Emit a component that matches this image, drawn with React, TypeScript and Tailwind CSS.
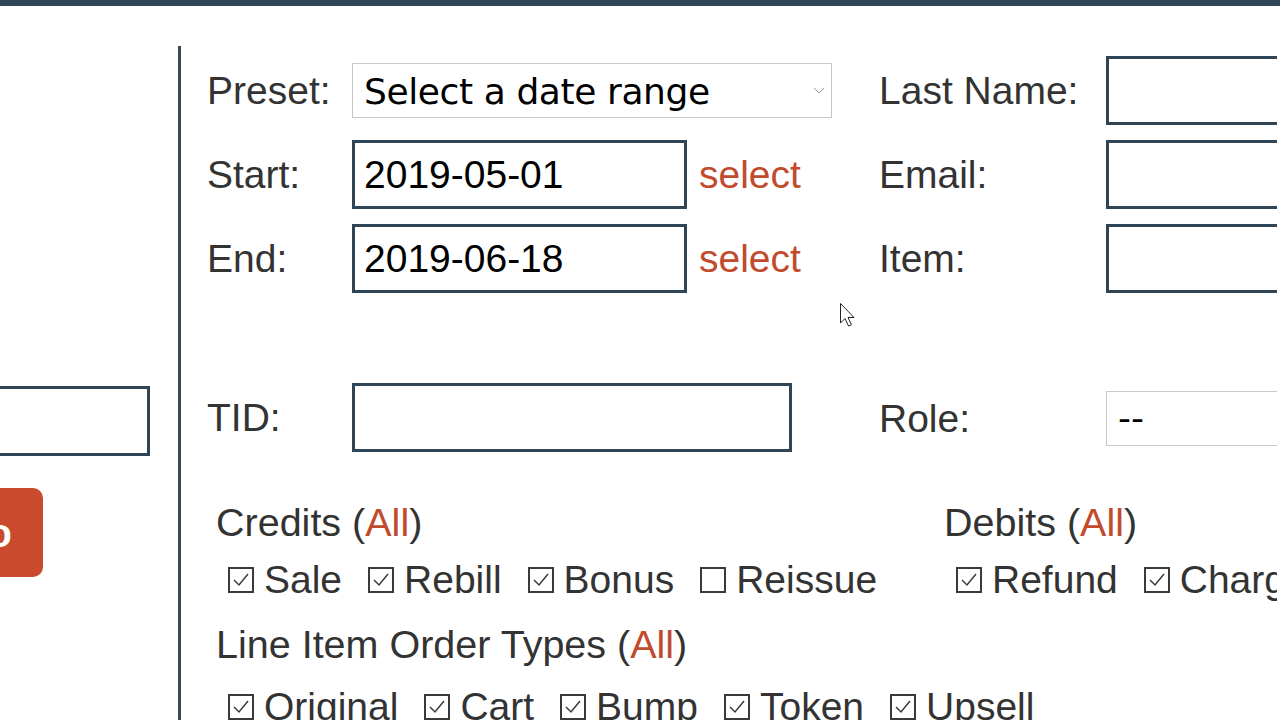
import React from "react";

function Box({ label, checked = true }: { label: string; checked?: boolean }) {
  return (
    <label className="flex items-center gap-[10px]">
      <svg width="26" height="26" viewBox="0 0 26 26" className="shrink-0">
        <rect x="1" y="1" width="24" height="24" fill="#fff" stroke="#3a3a3a" strokeWidth="2" />
        {checked && (
          <polyline points="6,13 11,18 20,7" fill="none" stroke="#3a3a3a" strokeWidth="1.5" />
        )}
      </svg>
      <span>{label}</span>
    </label>
  );
}

function Heading({ text }: { text: string }) {
  return (
    <div className="leading-[44px] whitespace-nowrap text-[39.5px]">
      {text} (<span className="text-[#c24a2d]">All</span>)
    </div>
  );
}

function Chevron() {
  return (
    <svg width="12" height="7" viewBox="0 0 12 7" className="shrink-0">
      <polyline points="1,1 6,6 11,1" fill="none" stroke="#9a9a9a" strokeWidth="1" />
    </svg>
  );
}

export default function App() {
  const textInput = "h-[69px] border-[3px] border-[#2f4454] bg-white pl-[9px] pt-[2px] flex items-center text-black";

  return (
    <div className="w-[1280px] h-[720px] overflow-hidden bg-white relative font-['Liberation_Sans',Arial,sans-serif] text-[39px] text-[#333]">
      <div className="h-[6px] bg-[#2e4558]" />

      <div className="flex mt-[40px]">
        {/* left column, mostly scrolled off */}
        <aside className="w-[178px] shrink-0 overflow-hidden pt-[340px]">
          <div className="-ml-[150px] w-[300px] h-[70px] border-[3px] border-[#2f4454]" />
          <button className="mt-[32px] -ml-[100px] w-[143px] h-[89px] rounded-[10px] bg-[#c94a2c] text-white font-bold text-[40px] flex items-center justify-end pr-[31px]">
            Go
          </button>
        </aside>

        <main className="w-[1099px] shrink-0 h-[674px] overflow-hidden border-l-[3px] border-[#34495e] pl-[26px]">
          <div className="flex">
            {/* date + tid column */}
            <div className="w-[625px] shrink-0 pt-[17px]">
              <div className="flex items-center h-[55px]">
                <span className="w-[145px] shrink-0 pt-[2px]">Preset:</span>
                <div className="w-[480px] h-[55px] border border-[#c8c8c8] flex items-center justify-between pl-[11px] pr-[6px] text-black font-['DejaVu_Sans',sans-serif] text-[36px] tracking-[-0.4px]">
                  <span className="pt-[3px]">Select a date range</span>
                  <Chevron />
                </div>
              </div>
              <div className="flex items-center mt-[22px]">
                <span className="w-[145px] shrink-0 pt-[2px]">Start:</span>
                <div className={`${textInput} w-[335px]`}>2019-05-01</div>
                <span className="ml-[12px] pt-[2px] text-[#c24a2d]">select</span>
              </div>
              <div className="flex items-center mt-[15px]">
                <span className="w-[145px] shrink-0 pt-[2px]">End:</span>
                <div className={`${textInput} w-[335px]`}>2019-06-18</div>
                <span className="ml-[12px] pt-[2px] text-[#c24a2d]">select</span>
              </div>
              <div className="flex items-center mt-[90px]">
                <span className="w-[145px] shrink-0 pt-[2px]">TID:</span>
                <div className={`${textInput} w-[440px]`} />
              </div>
            </div>

            {/* name / email column */}
            <div className="ml-[47px] shrink-0 pt-[10px]">
              <div className="flex items-center">
                <span className="w-[227px] shrink-0 pt-[2px]">Last Name:</span>
                <div className={`${textInput} w-[260px]`} />
              </div>
              <div className="flex items-center mt-[15px]">
                <span className="w-[227px] shrink-0 pt-[2px]">Email:</span>
                <div className={`${textInput} w-[260px]`} />
              </div>
              <div className="flex items-center mt-[15px]">
                <span className="w-[227px] shrink-0 pt-[2px]">Item:</span>
                <div className={`${textInput} w-[260px]`} />
              </div>
              <div className="flex items-center mt-[95px]">
                <span className="w-[227px] shrink-0 pt-[2px]">Role:</span>
                <div className="w-[260px] h-[55px] border border-[#c8c8c8] pl-[11px] flex items-center text-black font-['DejaVu_Sans',sans-serif] text-[36px]">
                  --
                </div>
              </div>
            </div>
          </div>

          {/* credits / debits */}
          <div className="flex mt-[48px] pl-[9px]">
            <div className="w-[728px] shrink-0">
              <Heading text="Credits" />
              <div className="flex gap-[26px] pl-[12px] mt-[14px] leading-[44px] whitespace-nowrap">
                <Box label="Sale" />
                <Box label="Rebill" />
                <Box label="Bonus" />
                <Box label="Reissue" checked={false} />
              </div>
            </div>
            <div className="shrink-0">
              <Heading text="Debits" />
              <div className="flex gap-[26px] pl-[12px] mt-[14px] leading-[44px] whitespace-nowrap">
                <Box label="Refund" />
                <Box label="Chargeback" />
              </div>
            </div>
          </div>

          <div className="pl-[9px] mt-[20px]">
            <Heading text="Line Item Order Types" />
            <div className="flex gap-[26px] pl-[12px] mt-[19px] leading-[44px] whitespace-nowrap">
              <Box label="Original" />
              <Box label="Cart" />
              <Box label="Bump" />
              <Box label="Token" />
              <Box label="Upsell" />
            </div>
          </div>
        </main>
      </div>

      {/* mouse pointer */}
      <svg width="18" height="26" viewBox="0 0 18 26" className="absolute left-[839px] top-[302px]">
        <path d="M1.5 1.5 L1.5 21 L6 16.5 L9.5 24 L12.5 22.8 L9 15.5 L15 15.5 Z" fill="#fff" stroke="#222" strokeWidth="1" strokeLinejoin="round" />
      </svg>
    </div>
  );
}
